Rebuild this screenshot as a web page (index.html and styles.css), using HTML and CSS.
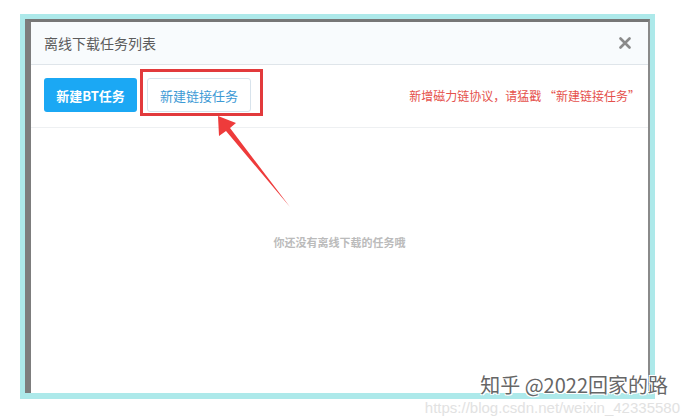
FILE: index.html
```html
<!DOCTYPE html>
<html lang="zh-CN">
<head>
    <meta charset="UTF-8">
    <title>离线下载任务列表</title>
    <link rel="stylesheet" href="styles.css">
</head>
<body>
    <div class="frame">
        <div class="modal">
            <div class="modal-header">
                <div class="modal-title">离线下载任务列表</div>
                <svg class="close" width="12" height="12" viewBox="0 0 12 12">
                    <path d="M1.5 1.5 L10.5 10.5 M10.5 1.5 L1.5 10.5" stroke="#8a8a8a" stroke-width="2.6" stroke-linecap="round"/>
                </svg>
            </div>
            <div class="toolbar">
                <button class="btn btn-primary">新建BT任务</button>
                <button class="btn btn-default">新建链接任务</button>
                <div class="tip">新增磁力链协议，请猛戳 “新建链接任务”</div>
            </div>
            <div class="empty">你还没有离线下载的任务哦</div>
        </div>
    </div>

    <!-- annotation drawn over the screenshot -->
    <div class="highlight"></div>
    <svg class="arrow" width="686" height="420" viewBox="0 0 686 420">
        <polygon points="218,116 236,123 230,128 290,207 226,131 219,136" fill="#ee3b3b"/>
    </svg>

    <div class="watermark">
        <span class="zh">知乎 @2022回家的路</span>
        <span class="url">https://blog.csdn.net/weixin_42335580</span>
    </div>
</body>
</html>
```

FILE: styles.css
```css
body {
    margin: 0;
    width: 686px;
    height: 420px;
    background: #ffffff;
    font-family: "Noto Sans CJK SC", "Microsoft YaHei", sans-serif;
    position: relative;
    overflow: hidden;
}

.frame {
    margin: 14px 0 0 20px;
    width: 625px;
    height: 374px;
    border: 5px solid #ade9ea; /* cyan outline */
    border-bottom-width: 6px;
}

.modal {
    height: 100%;
    box-sizing: border-box;
    background: #ffffff;
    border-left: 6px solid #7d7d7d;
    border-top: 3px solid #777;
    border-right: 2px solid #8a8a8a;
    display: flex;
    flex-direction: column;
}

.modal-header {
    height: 42px;
    display: flex;
    align-items: center;
    justify-content: space-between;
    padding: 0 17px 0 13px;
    background: #f8fbfd;
    border-bottom: 1px solid #dfe5ea;
}

.modal-title {
    font-size: 14px;
    color: #5c5c5c;
}

.close {
    display: block;
}

.toolbar {
    display: flex;
    align-items: center;
    gap: 10px;
    padding: 13px 8px 15px 13px;
    border-bottom: 1px solid #eef0f2;
}

.btn {
    height: 34px;
    border-radius: 3px;
    font-family: inherit;
    font-size: 13px;
    padding: 0;
}

.btn-primary {
    width: 93px;
    background: #1ba8f4;
    border: none;
    color: #fff;
    font-weight: bold;
}

.btn-default {
    width: 104px;
    background: #fff;
    border: 1px solid #d8e3ec;
    color: #3d9ad5;
}

.tip {
    margin-left: auto;
    font-size: 12px;
    color: #e5514c;
}

.empty {
    padding-top: 106px;
    text-align: center;
    font-size: 11px;
    font-weight: bold;
    color: #bbbbbb;
}

.highlight {
    position: absolute;
    left: 140px;
    top: 69px;
    width: 117px;
    height: 41px;
    border: 3px solid #e23a3c;
}

.arrow {
    position: absolute;
    left: 0;
    top: 0;
}

.watermark {
    position: absolute;
    right: 6px;
    top: 372px;
    width: 290px;
    height: 48px;
}

.watermark .zh {
    position: absolute;
    right: 12px;
    top: 3px;
    font-size: 20px;
    line-height: 20px;
    color: #666;
    text-shadow: 1px 1px 0 #fff, -1px -1px 0 #fff, 1px -1px 0 #fff, -1px 1px 0 #fff;
    z-index: 2;
}

.watermark .url {
    position: absolute;
    right: 0;
    top: 28px;
    font-family: "Liberation Sans", sans-serif;
    font-size: 15px;
    line-height: 16px;
    color: #e2e2e2;
}
```
